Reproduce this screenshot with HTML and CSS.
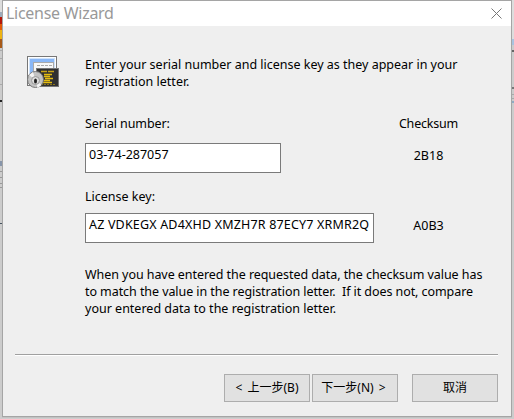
FILE: index.html
```html
<!DOCTYPE html>
<html lang="zh-CN">
<head>
<meta charset="utf-8">
<title>License Wizard</title>
<link rel="stylesheet" href="styles.css">
</head>
<body>
<div class="desktop">
  <div class="backdrop backdrop-left"></div>
  <main class="window">
    <header class="titlebar">
      <h1 class="title">License Wizard</h1>
      <svg class="close" width="11" height="11" viewBox="0 0 11 11"><path d="M.5.5l10 10M10.5.5l-10 10" stroke="#777" fill="none"/></svg>
    </header>
    <section class="intro">
      <svg class="app-icon" width="32" height="32" viewBox="0 0 32 32">
        <rect x=".5" y=".5" width="29" height="29" fill="#fff" stroke="#777"/>
        <rect x="2" y="2" width="26" height="18" fill="#cfe3fc"/>
        <path d="M3 3h24v3H7v9l-4 4z" fill="#8ab8f8"/>
        <rect x="6.500" y="6.500" width="20" height="13" fill="#f8f8f8" stroke="#aaa"/>
        <path d="M10 9.500h15" stroke="#aaa" stroke-dasharray="3 1"/>
        <rect x="9.500" y="12.500" width="22" height="18" fill="#303030" stroke="#777"/>
        <path d="M14 15.500h14" stroke="#c8a418" stroke-width="1.500" stroke-dasharray="6 1"/>
        <path d="M17 18.500h8M17 20.500h6M18 22.500h8M17 24.500h6M16 26.500h9" stroke="#e4bc10" stroke-width="1.600"/>
        <path d="M14 28.500h14" stroke="#8a7420" stroke-dasharray="2 1"/>
        <circle cx="8.500" cy="23.500" r="8" fill="#c4c4c4" stroke="#777"/>
        <path d="M8.500 24L2 19l4-3zM8.500 24l6 5-4 3z" fill="#f4f4f4"/>
        <circle cx="8.500" cy="24.500" r="4" fill="#ddd" stroke="#999"/>
        <ellipse cx="8.500" cy="25" rx="1.500" ry="2.500" fill="#222"/>
      </svg>
      <p class="copy"><span class="i1">Enter your serial number and license key as they appear in your</span><span class="i2">registration letter.</span></p>
    </section>
    <section class="fields">
      <label class="serial-label">Serial number:</label><span class="sum-head">Checksum</span>
      <div class="box serial">03-74-287057</div><span class="sum">2B18</span>
      <label class="key-label">License key:</label><span></span>
      <div class="box key"><span>AZ VDKEGX AD4XHD XMZH7R 87ECY7 XRMR2Q</span></div><span class="sum">A0B3</span>
    </section>
    <p class="copy note"><span class="n1">When you have entered the requested data, the checksum value has</span><span class="n2">to match the value in the registration letter.&nbsp; If it does not, compare</span><span class="n3">your entered data to the registration letter.</span></p>
    <footer class="actions">
      <button class="btn back">&lt; 上一步(B)</button>
      <button class="btn next">下一步(N) &gt;</button>
      <button class="btn cancel">取消</button>
    </footer>
  </main>
  <div class="backdrop backdrop-right"></div>
</div>
</body>
</html>
```
FILE: styles.css
```css
* { box-sizing: border-box; }
body { margin: 0; overflow: hidden; background: #ccc; color: #000; font: 12.5px/17px "Noto Sans", "Noto Sans CJK SC", sans-serif; }
p, h1 { margin: 0; }
.desktop { display: grid; grid-template-columns: 2px 510px 2px; height: 419px; background: linear-gradient(#ccc 417px, #bcbcbc 417px, #d4d4d4); }
.backdrop-left { background: linear-gradient(#ddd 0 12px, #9eabbb 12px 17px, #b51608 17px 24px, #e25a08 24px 30px, #eeb312 30px 39px, #a85a18 39px 48px, #ccc 48px 50px, #aaa 50px 51px, #ccc 51px 58px, #aaa 58px 59px, #ccc 59px 84px, #aaa 84px 85px, #ccc 85px 100px, #222 100px 102px, #ccc 102px 161px, #8795aa 161px 166px, #ccc 166px 171px, #999 171px 172px, #ccc 172px 177px, #999 177px 178px, #ccc 178px 183px, #999 183px 184px, #ccc 184px 187px, #999 187px 188px, #ccc 188px 223px, #46535f 223px 224px, #ccc 224px); }
.backdrop-right { background: linear-gradient(#ddd 0 39px, #a9c3e0 39px 45px, #ccc 45px 50px, #666 50px 52px, #ccc 52px 87px, #777 87px 89px, #ccc 89px 94px, #aaa 94px 95px, #ccc 95px 98px, #aaa 98px 99px, #ccc 99px 101px, #8fabc3 101px 103px, #ccc 103px); }
.window { height: 417px; border: 1px solid #a5a5a5; background: #efefef; }
.titlebar { display: flex; justify-content: space-between; align-items: flex-start; height: 25px; padding: 0 9px 0 3px; background: #fff; }
.title { font: 16px/25px "Noto Sans", sans-serif; color: #999; letter-spacing: -.28px; }
.close { margin-top: 7px; }
.intro { display: flex; height: 89px; padding-left: 24px; }
.app-icon { margin-top: 30px; flex: none; }
.intro .copy { margin: 30px 0 0 26px; }
.copy span { display: block; width: max-content; white-space: nowrap; }
.i1 { letter-spacing: -.01px; }
.fields { display: grid; grid-template-columns: 289px 109px; grid-template-rows: 28px 45px 25px 45px; padding-left: 82px; white-space: nowrap; }
.fields > :nth-child(even) { text-align: center; }
.serial-label { letter-spacing: -.1px; }
.sum-head { letter-spacing: -.2px; }
.sum { padding-top: 4px; }
.box { height: 30px; border: 1px solid #7a7a7a; background: #fff; padding: 2px 0 0 3px; overflow: hidden; }
.serial { width: 196px; }
.key { width: 289px; letter-spacing: .18px; }
.note { padding: 8px 0 0 82px; }
.n1 { letter-spacing: -.06px; }
.n2 { letter-spacing: -.07px; }
.actions { display: flex; margin: 37px 13px 0 12px; padding-top: 19px; border-top: 1px solid #a0a0a0; box-shadow: inset 0 1px #fff; justify-content: flex-end; }
.btn { width: 86px; height: 28px; margin: 0; padding: 0; border: 1px solid #adadad; background: #e1e1e1; color: #000; font: 12px/24px "Noto Sans", "Noto Sans CJK SC", sans-serif; word-spacing: 2px; white-space: nowrap; }
.next { margin-left: 2px; padding-right: 3px; }
.cancel { margin-left: 14px; }
```
